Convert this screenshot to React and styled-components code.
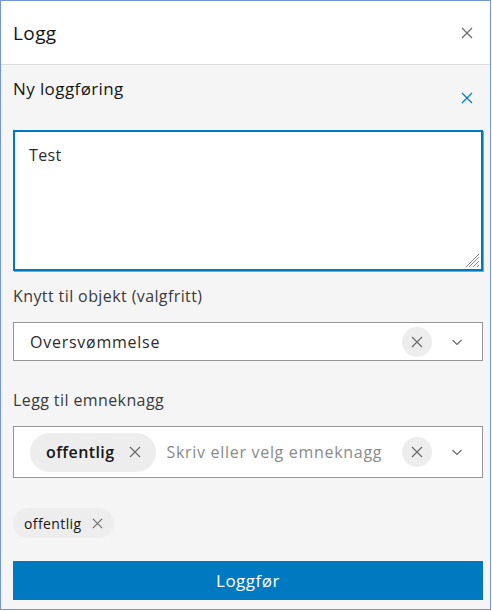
import React from 'react';
import styled, { createGlobalStyle } from 'styled-components';

const Global = createGlobalStyle`
  html, body { margin: 0; padding: 0; background: #fff; }
  body { font-family: "Open Sans", "Noto Sans", sans-serif; letter-spacing: 0.4px; }
  * { box-sizing: border-box; }
`;

const Panel = styled.div`
  width: 491px;
  height: 610px;
  border: 1px solid #7495d3;
  background: #f5f5f5;
  display: flex;
  flex-direction: column;
  overflow: hidden;
`;

const Header = styled.div`
  height: 64px;
  flex: none;
  background: #fff;
  border-bottom: 1px solid #dcdcdc;
  display: flex;
  align-items: center;
  justify-content: space-between;
  padding: 0 16px 0 12px;
`;

const Title = styled.h1`
  margin: 0;
  font-size: 19px;
  font-weight: 400;
  color: #151515;
`;

const IconBtn = styled.button`
  border: none;
  background: transparent;
  padding: 0;
  width: 14px;
  height: 14px;
  display: flex;
  align-items: center;
  justify-content: center;
  color: ${p => p.$color || '#6a6a6a'};
`;

const Body = styled.div`
  flex: 1;
  padding: 12px 7px 0 12px;
  display: flex;
  flex-direction: column;
`;

const SectionHead = styled.div`
  display: flex;
  justify-content: space-between;
  align-items: flex-start;
  padding-right: 9px;
  height: 53px;
`;

const SectionTitle = styled.h2`
  margin: 0;
  font-size: 17px;
  font-weight: 400;
  color: #151515;
  line-height: 24px;
`;

const TextArea = styled.div`
  position: relative;
  height: 141px;
  background: #fff;
  border: 2px solid #0079c1;
  box-shadow: 1px 1px 0 #9a9a9a;
  padding: 12px 14px;
  font-size: 16px;
  color: #2b2b2b;
`;

const Grip = styled.svg`
  position: absolute;
  right: 1px;
  bottom: 1px;
`;

const Label = styled.div`
  font-size: 16px;
  color: #3a3a3a;
  margin: ${p => p.$top}px 0 15px;
  line-height: 22px;
`;

const Field = styled.div`
  height: ${p => p.$h}px;
  background: #fff;
  border: 1px solid #959595;
  display: flex;
  align-items: center;
  padding: 0 19px 0 ${p => p.$pl}px;
  gap: 10px;
`;

const Value = styled.span`
  flex: 1;
  font-size: 16px;
  letter-spacing: 0.75px;
  color: #2b2b2b;
`;

const Placeholder = styled.span`
  flex: 1;
  font-size: 16px;
  letter-spacing: 0.7px;
  color: #8a8a8a;
  white-space: nowrap;
`;

const ClearCircle = styled.span`
  width: 30px;
  height: 30px;
  border-radius: 50%;
  background: #ededed;
  display: flex;
  align-items: center;
  justify-content: center;
  color: #6a6a6a;
  margin-right: 9px;
  flex: none;
`;

const Chevron = styled.span`
  width: 12px;
  display: flex;
  justify-content: center;
  color: #6a6a6a;
`;

const Chip = styled.span`
  display: inline-flex;
  align-items: center;
  gap: ${p => (p.$small ? 10 : 15)}px;
  height: ${p => (p.$small ? 30 : 39)}px;
  padding: 0 ${p => (p.$small ? 11 : 15)}px 0 ${p => (p.$small ? 11 : 16)}px;
  border-radius: 20px;
  background: #ededed;
  font-size: ${p => (p.$small ? 14 : 16)}px;
  font-weight: ${p => (p.$small ? 400 : 600)};
  color: #151515;
  flex: none;
  svg { color: #6a6a6a; }
`;

const ChipRow = styled.div`
  margin-top: 30px;
  display: flex;
`;

const Submit = styled.button`
  margin-top: 23px;
  height: 39px;
  border: none;
  background: #0079c1;
  color: #fff;
  font-family: inherit;
  letter-spacing: 0.5px;
  font-size: 17px;
  width: 100%;
`;

const X = ({ size = 12, stroke = 1.2 }) => (
  <svg width={size} height={size} viewBox="0 0 12 12" fill="none">
    <path d="M1 1L11 11M11 1L1 11" stroke="currentColor" strokeWidth={stroke} />
  </svg>
);

const Down = () => (
  <svg width="12" height="8" viewBox="0 0 12 8" fill="none">
    <path d="M1.5 2L6 6.5L10.5 2" stroke="currentColor" strokeWidth="1.2" />
  </svg>
);

export default function App() {
  return (
    <>
      <Global />
      <Panel>
        <Header>
          <Title>Logg</Title>
          <IconBtn><X /></IconBtn>
        </Header>
        <Body>
          <SectionHead>
            <SectionTitle>Ny loggføring</SectionTitle>
            <IconBtn $color="#0079c1" style={{ marginTop: 14 }}><X /></IconBtn>
          </SectionHead>
          <TextArea>
            Test
            <Grip width="14" height="14" viewBox="0 0 14 14">
              <path d="M13 3L3 13M13 7L7 13M13 11L11 13M13 0L0 13" stroke="#8a8a8a" strokeWidth="1" />
            </Grip>
          </TextArea>
          <Label $top={14}>Knytt til objekt (valgfritt)</Label>
          <Field $h={39} $pl={16}>
            <Value>Oversvømmelse</Value>
            <ClearCircle><X /></ClearCircle>
            <Chevron><Down /></Chevron>
          </Field>
          <Label $top={28}>Legg til emneknagg</Label>
          <Field $h={52} $pl={16}>
            <Chip>offentlig <X /></Chip>
            <Placeholder>Skriv eller velg emneknagg</Placeholder>
            <ClearCircle><X /></ClearCircle>
            <Chevron><Down /></Chevron>
          </Field>
          <ChipRow>
            <Chip $small>offentlig <X size={11} /></Chip>
          </ChipRow>
          <Submit>Loggfør</Submit>
        </Body>
      </Panel>
    </>
  );
}
